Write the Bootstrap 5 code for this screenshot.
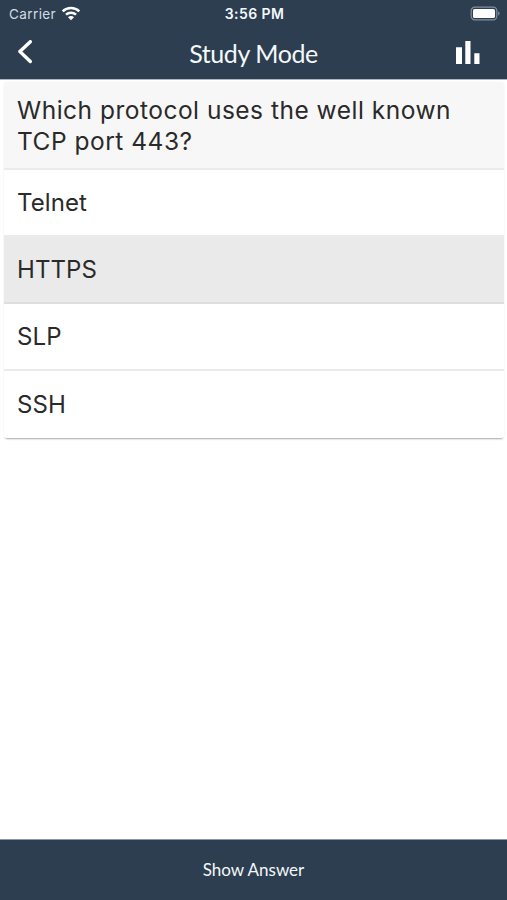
<!DOCTYPE html>
<html lang="en">
<head>
<meta charset="utf-8">
<meta name="viewport" content="width=device-width, initial-scale=1">
<title>Study Mode</title>
<link href="https://cdn.jsdelivr.net/npm/bootstrap@5.3.0/dist/css/bootstrap.min.css" rel="stylesheet">
<style>
  body { font-family: Inter, "Liberation Sans", sans-serif; color: #2a2a2a; height: 900px; }
  .app-bar { background: #2c3e50; color: #f4f8fb; }
  .app-top { height: 79px; box-shadow: 0 1px 0 #a9b7c0; z-index: 1; }
  .status { height: 27px; padding: 0 7px 0 9px; font-size: 13px; line-height: 28px; }
  .carrier { color: #d3dce4; font-size: 13.5px; letter-spacing: .4px; }
  .wifi { margin-left: 5px; }
  .clock { font-size: 14px; font-weight: 600; letter-spacing: .4px; }
  .titlebar { height: 52px; padding: 0 26px 0 17px; }
  .screen-title { font: 400 25px/52px Lato, sans-serif; letter-spacing: -.42px; padding-left: 9px; }
  .quiz { margin: 3px 3px 0 4px; border-radius: 3px; box-shadow: 0 2px 2px -1px rgba(0,0,0,.34), 0 0 2px rgba(0,0,0,.06); font-size: 24px; line-height: 31px; letter-spacing: .1px; }
  .quiz .list-group-item { color: #2a2a2a; border: 0; border-bottom: 2px solid #ebebeb; padding: 1px 13px 0; height: 67.2px; display: flex; align-items: center; }
  .quiz .question { background: #f7f7f7; height: 87.5px; padding-top: 2px; font-size: 24.5px; letter-spacing: .5px; }
  .quiz .chosen { background: #eaeaea; border-bottom-color: #dedede; }
  .quiz .list-group-item:last-child { border-bottom: 0; padding-bottom: 1px; }
  .answer-bar { height: 61px; border: 0; border-top: 1px solid #8797a4; border-radius: 0; font: 400 17px/60px Lato, sans-serif; color: #f4f8fb; }
</style>
<script src="https://cdn.jsdelivr.net/npm/bootstrap@5.3.0/dist/js/bootstrap.bundle.min.js"></script>
</head>
<body class="d-flex flex-column bg-white overflow-hidden">
<header class="app-bar app-top flex-shrink-0">
  <div class="status row g-0">
    <div class="col d-flex align-items-center">
      <span class="carrier">Carrier</span>
      <svg class="wifi" width="20" height="16" viewBox="0 0 20 16" fill="none" stroke="#fff" stroke-width="2.5"><path d="M1.700 5.300a11.800 11.800 0 0 1 16.600 0M5 8.700a7.100 7.100 0 0 1 10 0"/><path d="M10 14.300 7 11.200a4.200 4.200 0 0 1 6 0z" fill="#fff" stroke="none"/></svg>
    </div>
    <div class="col-auto clock">3:56 PM</div>
    <div class="col d-flex align-items-center justify-content-end">
      <svg width="30" height="16" viewBox="0 0 30 16"><rect x="1.200" y="1.200" width="25.600" height="12.600" rx="3.600" fill="none" stroke="#8290a0" stroke-width="1.200"/><rect x="3" y="3" width="22" height="9" rx="1.600" fill="#fff"/><path d="M28.200 5.300q2.800 2.200 0 4.400z" fill="#8290a0"/></svg>
    </div>
  </div>
  <div class="titlebar row g-0 align-items-center">
    <div class="col"><svg class="d-block" width="18" height="26" viewBox="0 0 18 26" fill="none" stroke="#fff" stroke-width="3.400" stroke-linecap="round" stroke-linejoin="round"><path d="M13.300 1.700 2.900 11.600 13.300 21.500"/></svg></div>
    <h1 class="screen-title col-auto m-0">Study Mode</h1>
    <div class="col d-flex justify-content-end"><svg width="26" height="26" viewBox="0 0 26 26" fill="#fff"><path d="M1 7.200h6V24H1zM10.300 1h5.200v23h-5.200zM19.300 13.200h5.200V24h-5.200z"/></svg></div>
  </div>
</header>
<main class="flex-grow-1">
  <div class="quiz list-group">
    <div class="list-group-item question">Which protocol uses the well known TCP port 443?</div>
    <div class="list-group-item">Telnet</div>
    <div class="list-group-item chosen">HTTPS</div>
    <div class="list-group-item">SLP</div>
    <div class="list-group-item">SSH</div>
  </div>
</main>
<button type="button" class="btn app-bar answer-bar w-100 p-0 flex-shrink-0">Show Answer</button>
</body>
</html>
